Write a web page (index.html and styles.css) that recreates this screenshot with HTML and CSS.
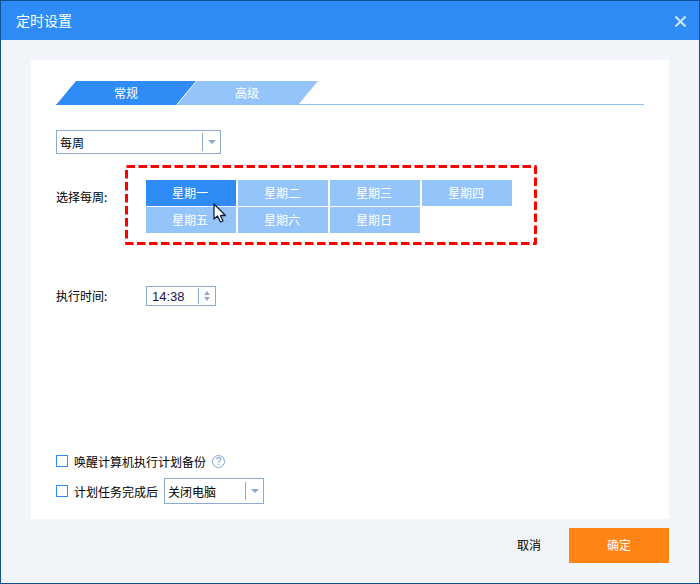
FILE: index.html
```html
<!DOCTYPE html>
<html lang="zh-CN">
<head>
<meta charset="utf-8">
<title>定时设置</title>
<link rel="stylesheet" href="styles.css">
</head>
<body>
<div class="window">
  <header class="titlebar">
    <span class="title">定时设置</span>
    <svg class="close" width="13" height="13" viewBox="0 0 13 13"><path d="M1.500 1.500L11.500 11.500M11.500 1.500L1.500 11.500" stroke="#cfe6ff" stroke-width="2" fill="none"/></svg>
  </header>
  <main class="main">
    <section class="panel">
      <nav class="tabs">
        <div class="tab tab-active">常规</div>
        <div class="tab tab-idle">高级</div>
      </nav>
      <div class="combo combo-week">
        <span class="combo-text">每周</span>
        <span class="combo-arrow"><i></i></span>
      </div>
      <div class="week-row">
        <span class="week-label">选择每周:</span>
        <div class="dash-box">
          <svg class="dash-line" width="412" height="80" viewBox="0 0 412 80"><rect x="1.500" y="1.500" width="409" height="77" fill="none" stroke="#f00" stroke-width="3" stroke-dasharray="8.500 3.500" stroke-linejoin="round"/></svg>
          <div class="days">
            <div class="day day-on">星期一</div>
            <div class="day">星期二</div>
            <div class="day">星期三</div>
            <div class="day">星期四</div>
            <div class="day">星期五</div>
            <div class="day">星期六</div>
            <div class="day">星期日</div>
          </div>
          <svg class="cursor" width="15" height="21" viewBox="0 0 15 21"><path d="M1 1L1 16L4.500 13L7.500 19L10 18L7.500 12.500L12.500 12.500Z" fill="#fff" stroke="#14213d" stroke-width="1.300" stroke-linejoin="round"/></svg>
        </div>
      </div>
      <div class="time-row">
        <span class="time-label">执行时间:</span>
        <div class="time">
          <span class="time-text">14:38</span>
          <span class="spin"><i class="up"></i><i class="down"></i></span>
        </div>
      </div>
      <div class="options">
        <div class="option option-wake">
          <span class="check"></span>
          <span>唤醒计算机执行计划备份</span>
          <span class="help">?</span>
        </div>
        <div class="option">
          <span class="check"></span>
          <span>计划任务完成后</span>
          <div class="combo combo-after">
            <span class="combo-text">关闭电脑</span>
            <span class="combo-arrow"><i></i></span>
          </div>
        </div>
      </div>
    </section>
    <footer class="footer">
      <span class="cancel">取消</span>
      <div class="ok">确定</div>
    </footer>
  </main>
</div>
</body>
</html>
```
FILE: styles.css
```css
* { box-sizing: border-box; }
html, body { margin: 0; padding: 0; }
body {
  width: 700px;
  height: 584px;
  overflow: hidden;
  font-family: "Noto Sans CJK SC", "Liberation Sans", sans-serif;
  font-size: 12px;
  color: #000;
  background: #fff;
}
.window {
  width: 700px;
  height: 584px;
  border: 1px solid #0f4f96;
  display: flex;
  flex-direction: column;
  background: #f1f5fa;
}
.titlebar {
  height: 39px;
  flex: none;
  background: #2f8cf6;
  color: #fff;
  display: flex;
  align-items: center;
  justify-content: space-between;
  padding: 0 12px 0 15px;
}
.title { font-size: 14px; line-height: 20px; padding-bottom: 2px; }
.close { margin-top: 1px; }
.main {
  flex: 1;
  display: flex;
  flex-direction: column;
  padding: 20px 30px 0;
}
.panel {
  height: 459px;
  flex: none;
  background: #fff;
  padding: 21px 25px 0;
  display: flex;
  flex-direction: column;
}
.tabs {
  width: 588px;
  height: 24px;
  flex: none;
  display: flex;
  border-bottom: 1px solid #8fc1f8;
}
.tab {
  width: 140px;
  height: 24px;
  color: #fff;
  font-size: 12px;
  line-height: 23px;
  text-align: center;
  clip-path: polygon(20px 0, 100% 0, 120px 100%, 0 100%);
}
.tab-active { background: #2f8cf6; }
.tab-idle { background: #94c4f9; margin-left: -19px; width: 141px; padding-right: 1px; clip-path: polygon(20px 0, 100% 0, 121px 100%, 0 100%); }
.combo {
  display: flex;
  align-items: center;
  justify-content: space-between;
  background: #fff;
  border: 1px solid #8daad3;
}
.combo-week { width: 165px; height: 24px; margin-top: 25px; flex: none; }
.combo-text { padding-left: 3px; line-height: 20px; padding-top: 1px; }
.combo-arrow {
  width: 18px;
  height: 18px;
  border-left: 1px solid #8daad3;
  display: flex;
  align-items: center;
  justify-content: center;
}
.combo-arrow i {
  width: 0;
  height: 0;
  border-left: 4px solid transparent;
  border-right: 4px solid transparent;
  border-top: 4px solid #8daad3;
}
.week-row {
  display: flex;
  align-items: flex-start;
  margin-top: 11px;
  flex: none;
}
.week-label { width: 69px; line-height: 18px; margin-top: 23px; }
.dash-box {
  position: relative;
  width: 412px;
  height: 80px;
  padding: 15px 21px;
}
.dash-line { position: absolute; left: 0; top: 0; }
.days {
  display: grid;
  grid-template-columns: repeat(4, 90px);
  grid-auto-rows: 26px;
  gap: 1px 2px;
}
.day {
  background: #94c4f9;
  color: #fff;
  line-height: 26px;
  text-align: center;
  padding-right: 2px;
}
.day-on { background: #2f8cf6; }
.cursor { position: absolute; left: 88px; top: 38px; }
.time-row {
  display: flex;
  align-items: center;
  margin-top: 41px;
  flex: none;
}
.time-label { width: 90px; line-height: 18px; }
.time {
  width: 70px;
  height: 20px;
  border: 1px solid #8daad3;
  display: flex;
  align-items: center;
  justify-content: space-between;
  font-family: "Liberation Sans", sans-serif;
  font-size: 13px;
  color: #14144a;
  padding-left: 5px;
}
.spin {
  width: 17px;
  height: 16px;
  border-left: 1px solid #8daad3;
  display: flex;
  flex-direction: column;
  align-items: center;
  justify-content: center;
  gap: 2px;
}
.spin i {
  width: 0;
  height: 0;
  border-left: 3px solid transparent;
  border-right: 3px solid transparent;
}
.spin .up { border-bottom: 4px solid #8daad3; }
.spin .down { border-top: 4px solid #8daad3; }
.options {
  margin-top: auto;
  padding-bottom: 15px;
  display: flex;
  flex-direction: column;
  gap: 8px;
}
.option {
  display: flex;
  align-items: center;
  height: 26px;
}
.option-wake { height: 18px; }
.check {
  width: 12px;
  height: 12px;
  border: 1px solid #2f8cf6;
  background: #fff;
  margin-right: 6px;
}
.help {
  width: 13px;
  height: 13px;
  margin-left: 6px;
  border: 1px solid #7fa8d8;
  border-radius: 50%;
  color: #6f9dd4;
  font-family: "Liberation Sans", sans-serif;
  font-size: 10px;
  line-height: 11px;
  text-align: center;
}
.combo-after { width: 100px; height: 26px; margin-left: 6px; }
.footer {
  flex: 1;
  display: flex;
  justify-content: flex-end;
  align-items: flex-start;
  padding-top: 9px;
}
.cancel { line-height: 33px; margin-right: 28px; }
.ok {
  width: 100px;
  height: 35px;
  background: #ff8414;
  color: #fff;
  line-height: 34px;
  text-align: center;
}
```
